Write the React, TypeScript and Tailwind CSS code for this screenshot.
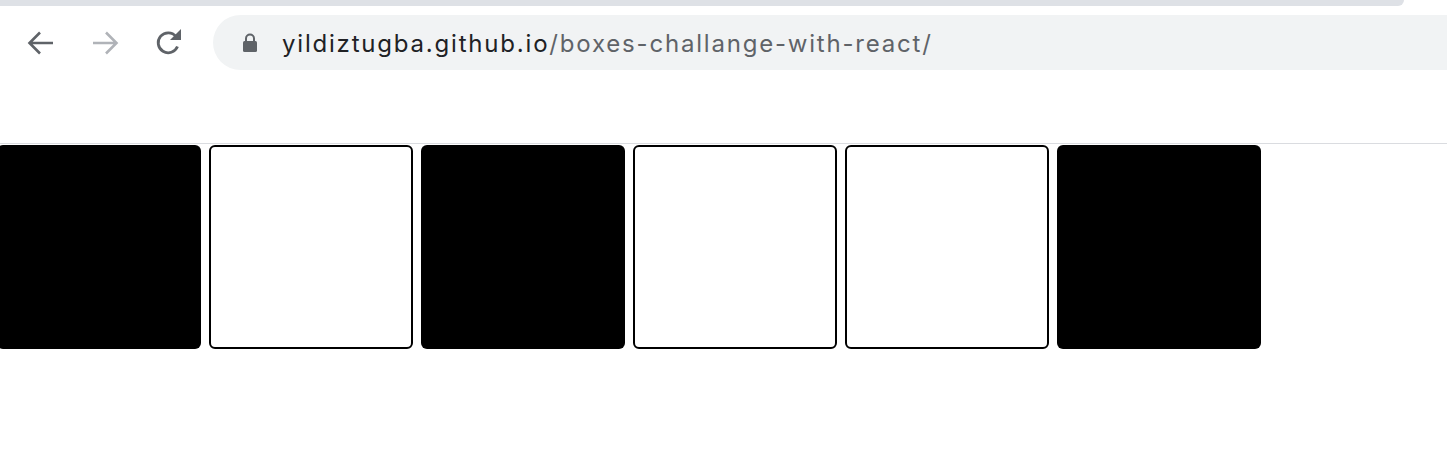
import React from 'react'

const boxes = [true, false, true, false, false, true]

function BackIcon({ color }: { color: string }) {
    return (
        <svg width="28" height="26" viewBox="0 0 28 26" fill="none">
            <path d="M26 13H3M13 2.5L2.5 13 13 23.5" stroke={color} strokeWidth="2.6" />
        </svg>
    )
}

function ForwardIcon({ color }: { color: string }) {
    return (
        <svg width="28" height="26" viewBox="0 0 28 26" fill="none">
            <path d="M2 13h23M15 2.5L25.5 13 15 23.5" stroke={color} strokeWidth="2.6" />
        </svg>
    )
}

function ReloadIcon() {
    return (
        <svg width="28" height="28" viewBox="0 0 28 28" fill="none">
            <path d="M22.5 17.5A10 10 0 1 1 21 7.5" stroke="#5f6368" strokeWidth="2.8" fill="none" />
            <path d="M15 11h11V0z" fill="#5f6368" />
        </svg>
    )
}

function LockIcon() {
    return (
        <svg width="16" height="20" viewBox="0 0 16 20">
            <path d="M4 8V5.5a4 4 0 0 1 8 0V8" stroke="#5f6368" strokeWidth="2" fill="none" />
            <rect x="1" y="8" width="14" height="11" rx="1.5" fill="#5f6368" />
        </svg>
    )
}

export default function App() {
    return (
        <div className="w-[1447px] h-[460px] bg-white overflow-hidden" style={{ fontFamily: 'Inter, Roboto, "Liberation Sans", sans-serif' }}>
            {/* tab strip */}
            <div className="h-[6px] w-[1404px] bg-[#dee1e6] rounded-br-[10px]" />

            {/* toolbar */}
            <div className="h-[138px] border-b border-[#dadce0]">
                <div className="flex items-center pt-[9px]">
                    <div className="flex items-center pl-[27px] gap-[36px] w-[213px]">
                        <BackIcon color="#5f6368" />
                        <ForwardIcon color="#b0b3b8" />
                        <ReloadIcon />
                    </div>
                    <div className="flex-1 h-[55px] bg-[#f1f3f4] rounded-l-full flex items-center pl-[29px]">
                        <LockIcon />
                        <span className="ml-[24px] mt-[2px] text-[24px] tracking-[1.8px] text-[#202124]">
                            yildiztugba.github.io
                            <span className="text-[#5f6368]">/boxes-challange-with-react/</span>
                        </span>
                    </div>
                </div>
            </div>

            {/* boxes */}
            <div className="flex gap-2 ml-[-3px] mt-[1px]">
                {boxes.map((dark, i) => (
                    <div
                        key={i}
                        className={
                            dark
                                ? 'w-[204px] h-[204px] rounded-[6px] bg-black'
                                : 'w-[204px] h-[204px] rounded-[6px] bg-white border-2 border-black'
                        }
                    />
                ))}
            </div>
        </div>
    )
}
